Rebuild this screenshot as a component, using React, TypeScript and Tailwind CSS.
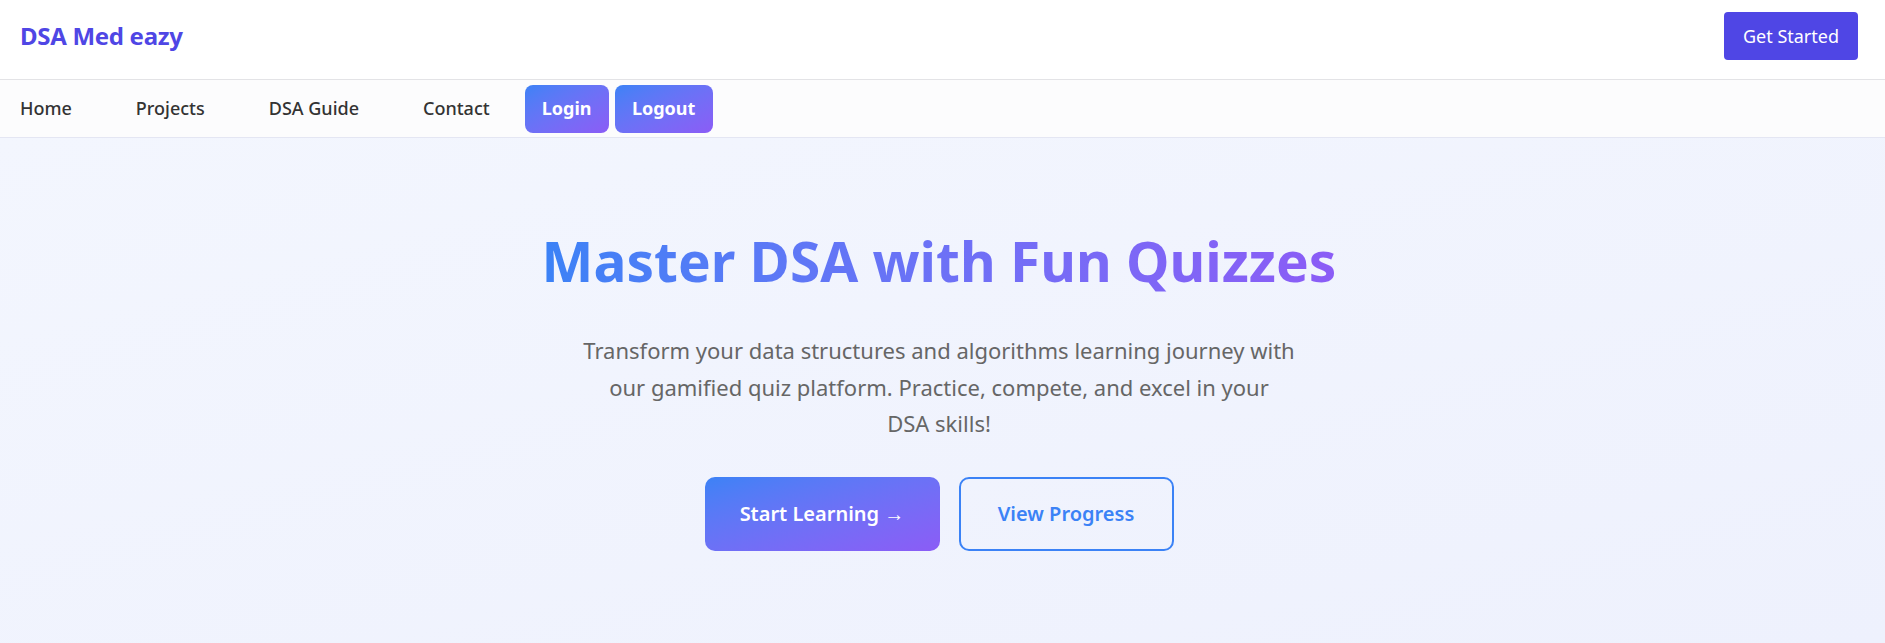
import React from "react";

export default function App() {
  return (
    <div className="min-h-[643px] font-['Noto_Sans',sans-serif] bg-white">
      <header className="h-[80px] flex items-start justify-between pl-5 pr-[27px] pt-3 bg-white border-b border-[#e3e3e6] shadow-[0_1px_3px_rgba(0,0,0,0.04)]">
        <div className="h-12 flex items-center text-[24px] font-bold text-[#4f46e5] tracking-[-0.3px]">
          DSA Med eazy
        </div>
        <button className="h-12 w-[134px] rounded-[4px] bg-[#4f46e5] text-white text-[18px] flex items-center justify-center">
          Get Started
        </button>
      </header>
      <nav className="h-[58px] flex items-center bg-[#fcfcfd] border-b border-[#e4e6f3]">
        <ul className="flex items-center">
          <li className="px-5 mr-6 text-[18px] font-medium text-[#333]">Home</li>
          <li className="px-5 mr-6 text-[18px] font-medium text-[#333]">Projects</li>
          <li className="px-5 mr-6 text-[18px] font-medium text-[#333]">DSA Guide</li>
          <li className="px-5 text-[18px] font-medium text-[#333]">Contact</li>
          <li className="ml-[15px]">
            <button className="h-12 w-[84px] rounded-[8px] bg-gradient-to-br from-[#3b82f6] to-[#8b5cf6] text-white text-[18px] font-bold">
              Login
            </button>
          </li>
          <li className="ml-[6px]">
            <button className="h-12 w-[98px] rounded-[8px] bg-gradient-to-br from-[#3b82f6] to-[#8b5cf6] text-white text-[18px] font-bold">
              Logout
            </button>
          </li>
        </ul>
      </nav>
      <section className="min-h-[505px] bg-gradient-to-br from-[#f3f6fe] to-[#eef1fd] flex flex-col items-center pt-[90px] pb-16 pr-[7px]">
        <h1 className="text-[55px] leading-[1.2] font-bold bg-gradient-to-r from-[#3b82f6] to-[#8b5cf6] bg-clip-text text-transparent">
          Master DSA with Fun Quizzes
        </h1>
        <p className="mt-[38px] max-w-[718px] text-center text-[22px] leading-[36.5px] text-[#666]">
          Transform your data structures and algorithms learning journey with our gamified quiz platform. Practice, compete, and excel in your
          <br />
          DSA skills!
        </p>
        <div className="mt-[35px] flex gap-[19px]">
          <button className="h-[74px] w-[235px] rounded-[10px] bg-gradient-to-br from-[#3b82f6] to-[#8b5cf6] text-white text-[20px] font-semibold">
            Start Learning →
          </button>
          <button className="h-[74px] w-[215px] rounded-[10px] border-2 border-[#3b82f6] text-[#3b82f6] text-[20px] font-semibold">
            View Progress
          </button>
        </div>
      </section>
    </div>
  );
}
